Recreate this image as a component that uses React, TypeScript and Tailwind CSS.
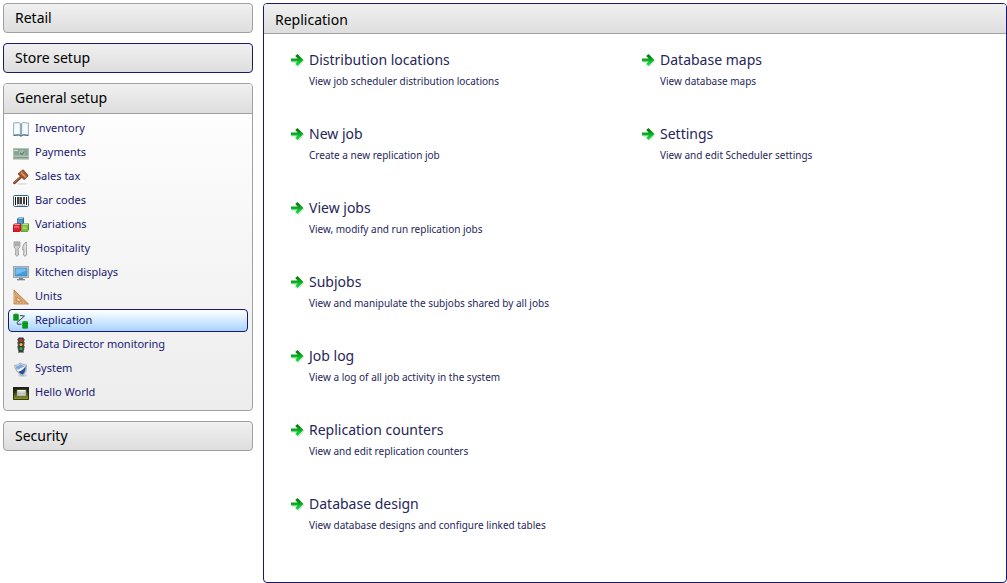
import type { ReactNode } from "react";

type IconProps = { children: ReactNode };

function Icon({ children }: IconProps) {
  return (
    <svg className="size-4 shrink-0" viewBox="0 0 16 16" aria-hidden="true">
      {children}
    </svg>
  );
}

const icons: Record<string, ReactNode> = {
  book: (
    <Icon>
      <path d="M0.5 2 L6 1.5 L8 3 L10 1.5 L15.5 2 V14 L10 13.5 L8 15 L6 13.5 L0.5 14Z" fill="#d8e8ee" stroke="#8aa6b1" strokeWidth="0.8" />
      <path d="M1.5 3 L6 2.5 L6.5 12.5 L1.5 13Z" fill="#f8fcfd" />
      <path d="M10 2.5 L14.5 3 V13 L9.5 12.5Z" fill="#f8fcfd" />
      <path d="M8 3 V15" stroke="#5f8496" strokeWidth="1.2" />
      <path d="M0.5 14.5 L6 14 L8 15.3 L10 14 L15.5 14.500" fill="none" stroke="#456472" strokeWidth="1" />
    </Icon>
  ),
  money: (
    <Icon>
      <rect x="0" y="3" width="16" height="11" fill="#b4c0b8" />
      <rect x="1" y="4" width="14" height="6" fill="#86a893" />
      <rect x="1" y="5" width="4" height="1" fill="#d2dfd5" />
      <ellipse cx="9" cy="8" rx="3" ry="3" fill="#a3bbaa" />
      <path d="M7 8 L9 9.500 L11.500 6.500" fill="none" stroke="#50775f" strokeWidth="1.100" />
      <path d="M1 10.500 H15" stroke="#9fb6a6" strokeWidth="1" />
      <path d="M1 12.500 H15" stroke="#7e9a89" strokeWidth="1" />
      <path d="M0 14 H16" stroke="#899990" strokeWidth="0.800" />
    </Icon>
  ),
  gavel: (
    <Icon>
      <ellipse cx="9" cy="14.800" rx="6" ry="0.900" fill="#dedede" />
      <path d="M1.300 14 L8.500 7.500" stroke="#7d4120" strokeWidth="2.400" strokeLinecap="round" />
      <path d="M1.500 13.500 L8 7.500" stroke="#c47d50" strokeWidth="0.900" strokeLinecap="round" />
      <path d="M5.500 4.500 L9.500 1 L15 7 L11.500 10.500Z" fill="#b2653a" stroke="#844420" strokeWidth="0.800" />
      <path d="M4.500 5 L6 3.500 L12 9.500 L11 11Z" fill="#96502a" />
      <path d="M9 1 L10.500 0.500 L15.500 6.500 L14.500 8Z" fill="#96502a" />
      <path d="M8 3.500 L12.500 8" stroke="#dd9d74" strokeWidth="1.300" />
    </Icon>
  ),
  barcode: (
    <Icon>
      <rect x="0.500" y="2.500" width="15" height="11" rx="1.200" fill="#fff" stroke="#32648b" />
      <path d="M2.500 4 V12 M13.500 4 V12" stroke="#111" strokeWidth="1" />
      <path d="M5 4 V11 M8 4 V11 M11 4 V11" stroke="#111" strokeWidth="1.600" />
      <path d="M6.500 4 V11" stroke="#555" strokeWidth="0.600" />
      <path d="M4 12 H12" stroke="#333" strokeWidth="0.800" strokeDasharray="1 0.700" />
    </Icon>
  ),
  cubes: (
    <Icon>
      <path d="M4 2 L5.500 0.500 H11 V6 L9.500 7.500 H4Z" fill="#2c6fa8" />
      <path d="M4.500 2.500 H9.500 V7 H4.500Z" fill="#559bd0" />
      <path d="M4.500 2 L6 1 H10.500 L9.500 2Z" fill="#9acbed" />
      <path d="M0 8 L1.500 6.500 H8 V13.500 L6.500 15 H0Z" fill="#a51019" />
      <path d="M0.500 8 H7.500 V14.500 H0.500Z" fill="#dc1f2e" />
      <path d="M1 9 H6 V11 H1Z" fill="#ee5a60" />
      <path d="M0.500 8 L2 7 H7.500 L6.500 8Z" fill="#f48e91" />
      <path d="M8 8 L9.500 6.500 H16 V12.500 L14.500 15 H8Z" fill="#4a8f22" />
      <path d="M8.500 8 H15 V14.500 H8.500Z" fill="#7fba43" />
      <path d="M8.500 8 L10 7 H15.500 L14.500 8Z" fill="#b8e58b" />
      <path d="M9.500 9.500 H13.500 V12 H9.500Z" fill="#a2d468" />
    </Icon>
  ),
  cutlery: (
    <Icon>
      <path d="M1 0.800 H2.300 V4.500 H3.300 V0.800 H4.700 V4.500 H5.700 V0.800 H7 V5 Q7 7.200 5.200 7.800 L5.600 14 Q4 16.500 2.400 14 L2.800 7.800 Q1 7.200 1 5Z" fill="#cfcfcf" stroke="#8c8c8c" strokeWidth="0.700" />
      <path d="M13.200 1 Q9.400 3 9.700 9 H11 L10.500 14 Q12 16.500 13.600 14Z" fill="#d5d5d5" stroke="#8c8c8c" strokeWidth="0.800" />
      <path d="M12.300 3.500 V14" stroke="#f4f4f4" strokeWidth="0.700" />
    </Icon>
  ),
  monitor: (
    <Icon>
      <rect x="0.500" y="1.500" width="15" height="11" fill="#e2e2e0" stroke="#a0a6a9" />
      <rect x="2" y="3" width="12" height="8" fill="#3f9fdf" stroke="#3576a6" strokeWidth="0.700" />
      <path d="M2.500 3.500 H13.500 V5.500 L2.500 10Z" fill="#74bdec" />
      <path d="M6 13 H10 V14 H12 V15 H4 V14 H6Z" fill="#7b858b" />
      <path d="M4 15.500 H12" stroke="#b8bec1" strokeWidth="0.700" />
    </Icon>
  ),
  triangle: (
    <Icon>
      <path d="M1 1 L15.500 15 H1Z M4 8 V12 H8.500Z" fill="#dda56c" fillRule="evenodd" stroke="#b37b45" strokeWidth="0.800" />
      <path d="M2 4 V14 H13" fill="none" stroke="#f1cba1" strokeWidth="0.800" />
      <path d="M3 14.500 V13 M6 14.500 V13 M9 14.500 V13 M12 14.500 V13 M2 5 H3 M2 8 H3 M2 11 H3" stroke="#9c6a36" strokeWidth="0.700" />
    </Icon>
  ),
  replication: (
    <Icon>
      <path d="M0.300 1 Q3 0 5.700 1 V7 Q3 8 0.300 7Z" fill="#0cab1d" />
      <path d="M0.300 3 H5.700 M0.300 5 H5.700 M0.300 7 H5.700" stroke="#067a14" strokeWidth="0.800" />
      <path d="M9.300 8.500 Q12 7.500 15 8.500 V15 Q12 16 9.300 15Z" fill="#0cab1d" />
      <path d="M9.300 10.500 H15 M9.300 12.700 H15 M9.300 14.900 H15" stroke="#067a14" strokeWidth="0.800" />
      <path d="M7 2.500 L11.500 3 L4 9.500 L4.500 11.200 H8.500" fill="none" stroke="#34404f" strokeWidth="1" />
    </Icon>
  ),
  traffic: (
    <Icon>
      <path d="M4 2 H12 L11 5 H12 L11 9 H12 L11 13 H5 L4 9 H5 L4 5 H5Z" fill="#767676" />
      <rect x="5.300" y="0.500" width="5.400" height="14.500" rx="0.800" fill="#363b38" />
      <circle cx="8" cy="3.300" r="1.600" fill="#e92a20" />
      <circle cx="8" cy="7.500" r="1.600" fill="#f4bb25" />
      <circle cx="8" cy="11.700" r="1.600" fill="#2dad49" />
      <path d="M5 15.500 H11" stroke="#777" strokeWidth="0.800" />
    </Icon>
  ),
  shield: (
    <Icon>
      <ellipse cx="9.500" cy="14.500" rx="4.500" ry="1.200" fill="#cfcfcf" />
      <path d="M1.500 4.500 Q5 4.500 7 2 Q10 3.800 13.500 4 Q14.500 10.500 9.800 15 Q3 12 1.500 4.500Z" fill="#e0e5ea" stroke="#929da8" strokeWidth="0.800" />
      <path d="M2.800 5.500 Q5.800 5.200 7.300 3.300 Q9.800 4.900 12.600 5 Q9.500 5.500 7 7.500 L4.200 9.500 Q3.200 7.500 2.800 5.500Z" fill="#7fa6dc" />
      <path d="M12.600 5 Q13 10.500 9.600 13.800 Q6.300 12.500 4.800 10.500 Q9 9.800 12.600 5Z" fill="#2552a0" />
      <path d="M3.800 8.800 Q8 8.300 12.600 5 Q9.500 10 5 10.700Z" fill="#f3f7fb" />
    </Icon>
  ),
  window: (
    <Icon>
      <defs>
        <linearGradient id="window-back" x1="0" y1="0" x2="0" y2="1">
          <stop offset="0.300" stopColor="#23260f" />
          <stop offset="1" stopColor="#9aa51c" />
        </linearGradient>
      </defs>
      <rect x="0" y="2" width="16" height="13" fill="url(#window-back)" />
      <rect x="4" y="5" width="9" height="6" fill="#d0d2c9" stroke="#7d8076" strokeWidth="0.600" />
      <path d="M4.500 5.700 H12.500" stroke="#fff" />
      <path d="M5 8.500 H8 M9 8.500 H12" stroke="#abafa3" strokeWidth="0.700" />
      <path d="M0.500 2.500 H15.500 V14.500 H0.500Z" fill="none" stroke="#20251a" strokeWidth="0.800" />
    </Icon>
  ),
};

function ArrowIcon() {
  return (
    <svg className="size-4 shrink-0" viewBox="0 0 16 16" aria-hidden="true">
      <defs>
        <linearGradient id="arrow-green" x1="0" y1="0" x2="0" y2="1">
          <stop offset="0.200" stopColor="#07820e" />
          <stop offset="0.850" stopColor="#0be03b" />
        </linearGradient>
      </defs>
      <path d="M2 7.500 H8 L7 4 L9 3 L14.500 9 L9 15 L7 13.500 L8 11 H2Z" fill="#e4e4e4" />
      <path d="M1 6.500 H7.600 L5.200 4 L7.500 1.900 L13.400 8 L7.500 14.100 L5.200 12 L7.600 9.500 H1Z" fill="url(#arrow-green)" />
    </svg>
  );
}

const menu = [
  { label: "Inventory", icon: "book" },
  { label: "Payments", icon: "money" },
  { label: "Sales tax", icon: "gavel" },
  { label: "Bar codes", icon: "barcode" },
  { label: "Variations", icon: "cubes" },
  { label: "Hospitality", icon: "cutlery" },
  { label: "Kitchen displays", icon: "monitor" },
  { label: "Units", icon: "triangle" },
  { label: "Replication", icon: "replication", selected: true },
  { label: "Data Director monitoring", icon: "traffic" },
  { label: "System", icon: "shield" },
  { label: "Hello World", icon: "window" },
];

const columns = [
  [
    { title: "Distribution locations", text: "View job scheduler distribution locations" },
    { title: "New job", text: "Create a new replication job" },
    { title: "View jobs", text: "View, modify and run replication jobs" },
    { title: "Subjobs", text: "View and manipulate the subjobs shared by all jobs" },
    { title: "Job log", text: "View a log of all job activity in the system" },
    { title: "Replication counters", text: "View and edit replication counters" },
    { title: "Database design", text: "View database designs and configure linked tables" },
  ],
  [
    { title: "Database maps", text: "View database maps" },
    { title: "Settings", text: "View and edit Scheduler settings" },
  ],
];

function SectionButton({ label, focused = false }: { label: string; focused?: boolean }) {
  return (
    <button
      type="button"
      className={`flex h-[30px] items-center rounded-[4px] border bg-linear-to-b from-[#f0f0f0] to-[#dedede] px-[11px] pb-[2px] text-left text-[14px] text-black ${focused ? "border-[#191970]" : "border-[#a0a0a0]"}`}
    >
      {label}
    </button>
  );
}

export default function App() {
  return (
    <div className="flex min-h-screen gap-[10px] bg-white pt-[3px] pl-[3px] font-['Noto_Sans',sans-serif]">
      <nav className="flex w-[250px] shrink-0 flex-col gap-[10px]" aria-label="Setup sections">
        <SectionButton label="Retail" />
        <SectionButton label="Store setup" focused />
        <section className="overflow-hidden rounded-[4px] border border-[#a0a0a0] bg-linear-to-b from-white to-[#ededed]">
          <button
            type="button"
            aria-expanded="true"
            className="flex h-[30px] w-full items-center border-b border-[#a0a0a0] bg-linear-to-b from-[#f0f0f0] to-[#dedede] px-[11px] pb-[2px] text-left text-[14px] text-black"
          >
            General setup
          </button>
          <ul className="px-1 pt-[3px] pb-[5px]">
            {menu.map((item) => (
              <li key={item.label} className="pb-px">
                <a
                  href="#"
                  aria-current={item.selected ? "page" : undefined}
                  className={`flex h-[23px] items-center gap-[6px] rounded-[4px] border px-1 text-[11px] text-[#191970] ${item.selected ? "border-[#191970] bg-linear-to-b from-white to-[#a8d3ff]" : "border-transparent"}`}
                >
                  {icons[item.icon]}
                  <span className="pb-px">{item.label}</span>
                </a>
              </li>
            ))}
          </ul>
        </section>
        <SectionButton label="Security" />
      </nav>

      <main className="flex min-w-0 grow flex-col overflow-hidden rounded-[4px] border border-[#191970]">
        <h1 className="flex h-[30px] shrink-0 items-center border-b border-[#a0a0a0] bg-linear-to-b from-[#f0f0f0] to-[#dedede] px-[11px] pt-[2px] text-[14px] text-black">
          Replication
        </h1>
        <div className="grid grid-cols-2 pt-4 pr-[14px] pl-[26px]">
          {columns.map((items, index) => (
            <ul key={index}>
              {items.map((item) => (
                <li key={item.title} className="h-[74px]">
                  <a href="#" className="flex gap-[3px] text-[#26265a]">
                    <span className="pt-[2px]">
                      <ArrowIcon />
                    </span>
                    <span className="flex flex-col gap-[3px]">
                      <span className="text-[14px] leading-5">{item.title}</span>
                      <span className="text-[10px] leading-4">{item.text}</span>
                    </span>
                  </a>
                </li>
              ))}
            </ul>
          ))}
        </div>
      </main>
    </div>
  );
}
